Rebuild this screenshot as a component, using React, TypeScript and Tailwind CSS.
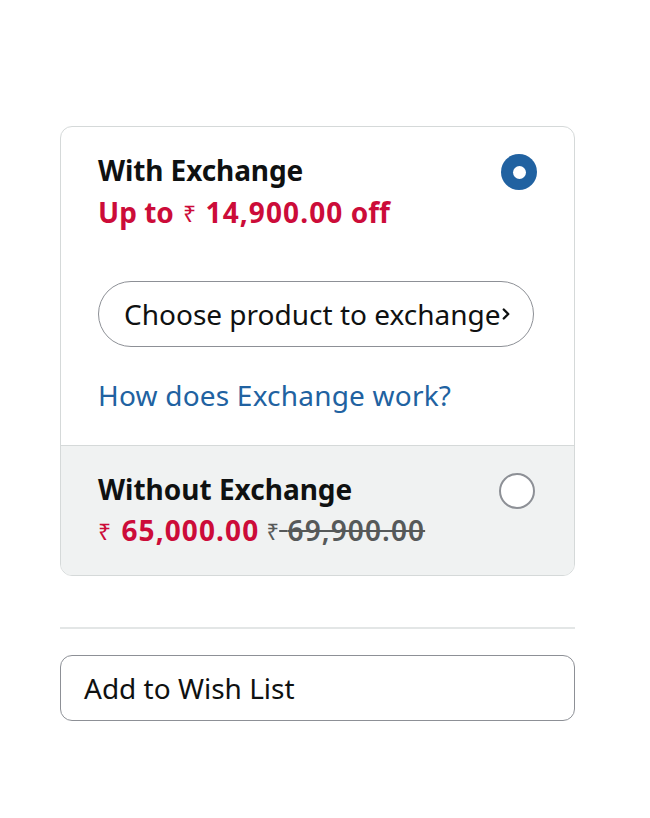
import { ChevronRight } from 'lucide-react';

const Radio = ({ checked }: { checked: boolean }) =>
    checked ? (
        <span className="flex h-[36px] w-[36px] shrink-0 items-center justify-center rounded-full bg-[#2162a1]">
            <span className="block h-[13px] w-[13px] rounded-full bg-white" />
        </span>
    ) : (
        <span className="block h-[36px] w-[36px] shrink-0 rounded-full border-2 border-[#8d9096] bg-white" />
    );

export default function App() {
    return (
        <div className="min-h-[818px] w-[650px] bg-white pt-[126px] pl-[60px] font-['Noto_Sans',sans-serif]">
            <div className="w-[515px] overflow-hidden rounded-[12px] border border-[#d5d9d9]">
                <div className="px-[37px] pt-[22px] pb-[33px]">
                    <div className="flex items-start justify-between">
                        <div className="text-[28px] font-bold leading-[42px]">
                            <p className="h-[42px] tracking-[-0.1px] text-[#0f1111]">With Exchange</p>
                            <p className="h-[42px] text-[#cc0c39]">
                                Up to{' '}
                                <span className="mx-[2px] align-[1px] text-[23px] leading-none font-normal">₹</span>{' '}
                                <span className="tracking-[1.1px]">14,900.00</span> off
                            </p>
                        </div>
                        <div className="mt-[5px]">
                            <Radio checked />
                        </div>
                    </div>
                    <button className="mt-[48px] flex h-[66px] w-[436px] items-center rounded-full border border-[#8d9096] pl-[25px] text-[28px] text-[#0f1111]">
                        Choose product to exchange
                        <ChevronRight className="-ml-[3px] h-[18px] w-[18px]" strokeWidth={3.2} />
                    </button>
                    <p className="mt-[31px] h-[34px] text-[28px] leading-[34px] tracking-[0.2px] text-[#2162a1]">
                        How does Exchange work?
                    </p>
                </div>
                <div className="flex items-start justify-between border-t border-[#d5d9d9] bg-[#f0f2f2] px-[37px] pt-[23px] pb-[24px]">
                    <div className="text-[28px] font-bold leading-[41px]">
                        <p className="h-[41px] text-[#0f1111]">Without Exchange</p>
                        <p className="h-[41px] text-[#cc0c39]">
                            <span className="mr-[3px] align-[1px] text-[23px] leading-none font-normal">₹</span>{' '}
                            <span className="tracking-[1.1px]">65,000.00</span>{' '}
                            <span className="font-semibold text-[#565959]">
                                <span className="align-[1px] text-[22px] leading-none font-normal">₹</span>
                                <span className="tracking-[1.1px] line-through">{'\u00a0'}69,900.00</span>
                            </span>
                        </p>
                    </div>
                    <div className="mt-[4px] mr-[2px]">
                        <Radio checked={false} />
                    </div>
                </div>
            </div>
            <hr className="mt-[51px] w-[515px] border-t-2 border-[#e3e6e6]" />
            <button className="mt-[26px] flex h-[66px] w-[515px] items-center rounded-[12px] border border-[#8d9096] pl-[23px] text-[28px] text-[#0f1111]">
                Add to Wish List
            </button>
        </div>
    );
}
